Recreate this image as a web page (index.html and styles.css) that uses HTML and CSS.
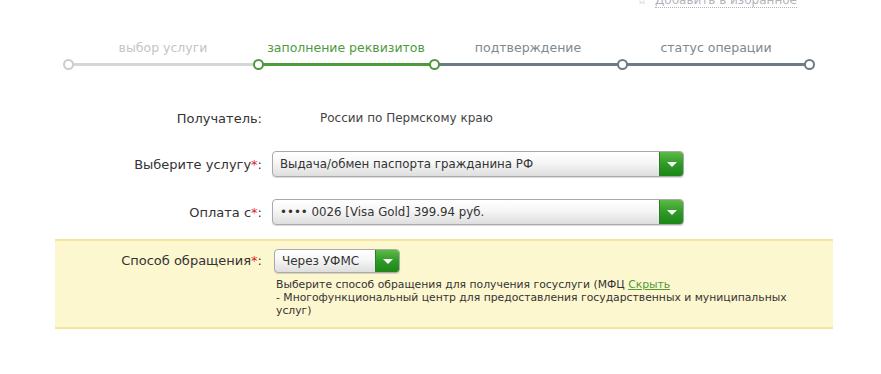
FILE: index.html
```html
<!DOCTYPE html>
<html lang="ru">
<head>
    <meta charset="UTF-8">
    <title>Оплата госуслуги</title>
    <link rel="stylesheet" href="styles.css">
</head>
<body>
    <div class="top-links">
        <span class="star">☆</span>
        <a href="#" class="fav-link">Добавить в избранное</a>
    </div>

    <div class="steps">
        <div class="step done">
            <div class="step-title">выбор услуги</div>
            <div class="step-line"></div>
        </div>
        <div class="step current">
            <div class="step-title">заполнение реквизитов</div>
            <div class="step-line"></div>
        </div>
        <div class="step next">
            <div class="step-title">подтверждение</div>
            <div class="step-line"></div>
        </div>
        <div class="step next last">
            <div class="step-title">статус операции</div>
            <div class="step-line"></div>
        </div>
    </div>

    <div class="form">
        <div class="row row-receiver">
            <div class="label">Получатель:</div>
            <div class="value">России по Пермскому краю</div>
        </div>

        <div class="row row-select">
            <div class="label">Выберите услугу<span class="req">*</span>:</div>
            <div class="select wide">
                <span class="select-text">Выдача/обмен паспорта гражданина РФ</span>
                <span class="select-btn"><span class="arrow"></span></span>
            </div>
        </div>

        <div class="row row-select">
            <div class="label">Оплата с<span class="req">*</span>:</div>
            <div class="select wide">
                <span class="select-text">•••• 0026 [Visa Gold] 399.94 руб.</span>
                <span class="select-btn"><span class="arrow"></span></span>
            </div>
        </div>

        <div class="row highlight">
            <div class="label">Способ обращения<span class="req">*</span>:</div>
            <div class="field">
                <div class="select small">
                    <span class="select-text">Через УФМС</span>
                    <span class="select-btn"><span class="arrow"></span></span>
                </div>
                <div class="hint">
                    Выберите способ обращения для получения госуслуги (МФЦ <a href="#" class="hint-link">Скрыть</a><br>
                    - Многофункциональный центр для предоставления государственных и муниципальных услуг)
                </div>
            </div>
        </div>
    </div>
</body>
</html>
```

FILE: styles.css
```css
body {
    margin: 0;
    background: #ffffff;
    font-family: "DejaVu Sans", Verdana, sans-serif;
    color: #333333;
}
.top-links {
    display: flex;
    justify-content: flex-end;
    align-items: center;
    gap: 8px;
    height: 20px;
    margin-top: -10px;
    padding-right: 84px;
    font-size: 12px;
    color: #b0b4b8;
}
.star {
    font-size: 11px;
}
.fav-link {
    color: #b0b4b8;
    text-decoration: none;
    border-bottom: 1px dotted #b0b4b8;
}

/* шаги */
.steps {
    display: flex;
    margin: 29px 0 0 68px;
    width: 742px;
}
.step {
    position: relative;
    display: flex;
    flex-direction: column;
}
.step:nth-child(1) { width: 190px; }
.step:nth-child(2) { width: 176px; }
.step:nth-child(3) { width: 188px; }
.step:nth-child(4) { width: 188px; }
.step-title {
    text-align: center;
    font-size: 12.5px;
    height: 18px;
    line-height: 18px;
}
.step-line {
    height: 3px;
    margin-top: 6px;
}
.step::before,
.step.last::after {
    content: "";
    position: absolute;
    left: -5px;
    top: 20px;
    width: 7px;
    height: 7px;
    border-radius: 50%;
    background: #ffffff;
    border: 2px solid #777777;
    z-index: 1;
}
.step.last::after {
    left: auto;
    right: -5px;
}
.done .step-title { color: #c4c4c4; }
.done .step-line { background: #d6d6d6; }
.done::before { border-color: #cccccc; }
.current .step-title { color: #4e9a3f; }
.current .step-line { background: #4e9a3f; }
.current::before { border-color: #4e9a3f; }
.next .step-title { color: #80878d; }
.next .step-line { background: #6d7b86; }
.next::before { border-color: #4e9a3f; }
.step.last::before,
.step.last::after { border-color: #6d7b86; }

/* форма */
.form {
    width: 778px;
    margin: 40px 0 0 55px;
}
.row {
    display: flex;
    align-items: center;
    font-size: 13px;
}
.label {
    width: 207px;
    text-align: right;
    color: #333333;
    flex-shrink: 0;
}
.req {
    color: #d8262c;
}
.row-receiver {
    height: 24px;
}
.row-receiver .value {
    margin-left: 58px;
    font-size: 12px;
    color: #444444;
}
.row-select {
    height: 26px;
    margin-top: 21px;
}
.row-select + .row-select {
    margin-top: 22px;
}

.select {
    display: flex;
    height: 26px;
    margin-left: 10px;
    border: 1px solid #a9a9a9;
    border-radius: 4px;
    background: linear-gradient(#ffffff 0%, #f6f6f6 45%, #dedede 100%);
    box-shadow: 0 1px 1px rgba(0, 0, 0, 0.15);
    overflow: hidden;
    box-sizing: border-box;
}
.select.wide {
    width: 412px;
}
.select.small {
    width: 126px;
    height: 24px;
    margin-left: 0;
}
.select-text {
    flex: 1;
    padding-left: 7px;
    line-height: 24px;
    font-size: 11.8px;
    color: #333333;
    white-space: nowrap;
}
.select.small .select-text {
    line-height: 22px;
    font-size: 12px;
}
.select-btn {
    width: 23px;
    display: flex;
    align-items: center;
    justify-content: center;
    background: linear-gradient(#5dbb47 0%, #2f9a26 50%, #1c8619 100%);
    border-left: 1px solid #2d7d25;
}
.arrow {
    width: 0;
    height: 0;
    border-left: 5px solid transparent;
    border-right: 5px solid transparent;
    border-top: 5px solid #ffffff;
}

.highlight {
    align-items: flex-start;
    margin-top: 14px;
    padding: 8px 0 10px;
    background: #fdf7cf;
    border-top: 2px solid #f3e59a;
    border-bottom: 2px solid #f3e59a;
}
.highlight .label {
    padding-top: 4px;
}
.field {
    margin-left: 12px;
}
.hint {
    width: 525px;
    margin: 5px 0 0 2px;
    font-size: 10.8px;
    line-height: 13px;
    color: #333333;
}
.hint-link {
    color: #4f9a3d;
}
```
